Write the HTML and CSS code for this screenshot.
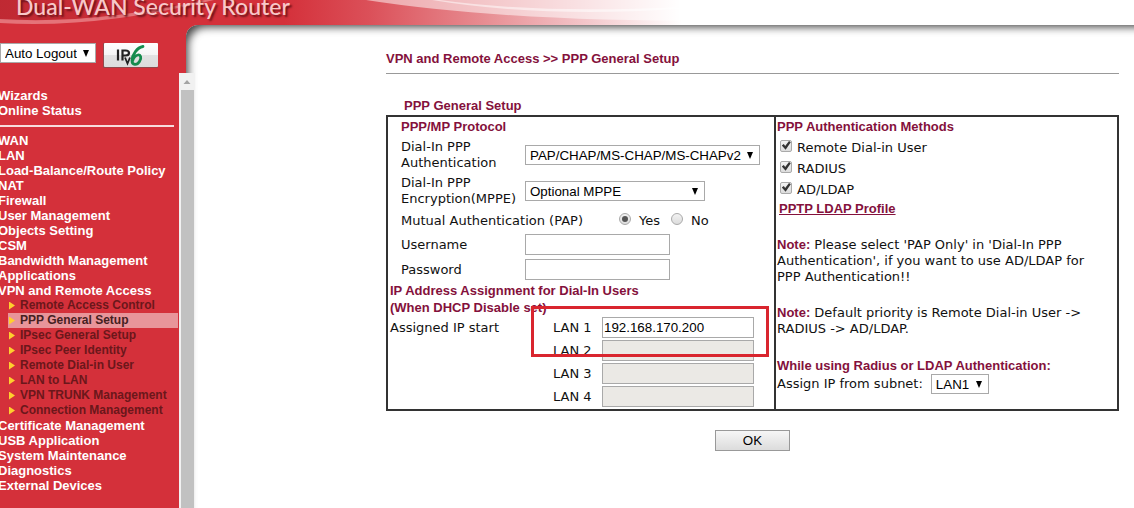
FILE: index.html
```html
<!DOCTYPE html>
<html lang="en">

<head>
  <meta charset="utf-8">
  <title>PPP General Setup</title>
  <link rel="stylesheet" href="styles.css">
</head>

<body>
  <header class="banner">
    <svg class="banner-art" width="710" height="25" viewBox="0 0 710 25" aria-hidden="true">
      <defs>
        <linearGradient id="fade" x1="0" x2="1" y1="0" y2="0">
          <stop offset="0" stop-color="#d4303a" />
          <stop offset="0.4" stop-color="#d4303a" />
          <stop offset="0.52" stop-color="#db5059" />
          <stop offset="0.68" stop-color="#e78c91" />
          <stop offset="0.82" stop-color="#f3c4c8" />
          <stop offset="0.96" stop-color="#fff" />
        </linearGradient>
        <linearGradient id="dark" x1="0" x2="1" y1="0" y2="0">
          <stop offset="0" stop-color="#b2252e" />
          <stop offset="1" stop-color="#b2252e" stop-opacity="0" />
        </linearGradient>
      </defs>
      <rect width="710" height="25" fill="url(#fade)" />
      <path d="M0 0H230Q120 23 0 20Z" fill="url(#dark)" opacity="0.6" />
      <path d="M0 19Q90 25 205 0L214 0Q95 29 0 23Z" fill="#f0a0a4" opacity="0.6" />
      <path d="M366 0Q500 21 710 21V0Z" fill="#fff" opacity="0.5" />
      <path d="M440 0Q540 14 680 7L680 9Q540 18 432 0Z" fill="#fff" opacity="0.5" />
    </svg>
    <div class="banner-title">Dual-WAN Security Router</div>
  </header>

  <div class="layout">
    <aside class="sidebar">
      <div class="tools">
        <select class="logout" aria-label="Auto Logout">
          <option>Auto Logout</option>
        </select>
        <svg class="ipv6" width="55" height="25" viewBox="0 0 55 25" role="img" aria-label="IPv6">
          <defs>
            <linearGradient id="plate" x1="0" x2="0" y1="0" y2="1">
              <stop offset="0" stop-color="#fff" />
              <stop offset="0.5" stop-color="#f5f5f5" />
              <stop offset="0.52" stop-color="#e2e2e2" />
              <stop offset="1" stop-color="#dcdcdc" />
            </linearGradient>
          </defs>
          <rect width="55" height="25" rx="1" fill="#8f4a4c" />
          <rect x="1" width="54" height="24" rx="1" fill="url(#plate)" />
          <path d="M15 6.500V17.500M19.500 17.500V7.500H22.500Q26 7.500 26 10Q26 12.500 22.500 12.500H20" fill="none" stroke="#222" stroke-width="2.200" />
          <path d="M22 14.500L24.500 20.500L27 14.500" fill="none" stroke="#222" stroke-width="1.800" />
          <path d="M40 3.500C34 4.500 29 12 29 17.500C29 22.500 34 22.500 36.500 18.500C39 14.500 37.500 11.500 35 12C32.500 12.500 30.500 15 29.500 18" fill="none" stroke="#168c4e" stroke-width="2.800" stroke-linecap="round" />
        </svg>
      </div>
      <div class="menu-frame">
        <nav class="menu">
          <a href="#">Wizards</a>
          <a href="#">Online Status</a>
          <hr class="menu-line">
          <a href="#">WAN</a>
          <a href="#">LAN</a>
          <a href="#">Load-Balance/Route Policy</a>
          <a href="#">NAT</a>
          <a href="#">Firewall</a>
          <a href="#">User Management</a>
          <a href="#">Objects Setting</a>
          <a href="#">CSM</a>
          <a href="#">Bandwidth Management</a>
          <a href="#">Applications</a>
          <a href="#">VPN and Remote Access</a>
          <div class="submenu">
            <a href="#">Remote Access Control</a>
            <a href="#" class="active">PPP General Setup</a>
            <a href="#">IPsec General Setup</a>
            <a href="#">IPsec Peer Identity</a>
            <a href="#">Remote Dial-in User</a>
            <a href="#">LAN to LAN</a>
            <a href="#">VPN TRUNK Management</a>
            <a href="#">Connection Management</a>
          </div>
          <a href="#">Certificate Management</a>
          <a href="#">USB Application</a>
          <a href="#">System Maintenance</a>
          <a href="#">Diagnostics</a>
          <a href="#">External Devices</a>
        </nav>
        <div class="scrollbar">
          <svg width="16" height="17" viewBox="0 0 16 17" aria-hidden="true">
            <path d="M4.500 11L8 7L11.500 11Z" fill="#a3a3a3" />
          </svg>
          <div class="thumb"></div>
        </div>
      </div>
    </aside>

    <main class="content">
      <h1 class="page-title">VPN and Remote Access &gt;&gt; PPP General Setup</h1>
      <form class="setup">
        <h2 class="section-title">PPP General Setup</h2>
        <div class="panels">
          <section class="panel">
            <div class="protocol">
              <h3>PPP/MP Protocol</h3>
              <div class="row tall">
                <label for="auth">Dial-In PPP Authentication</label>
                <select id="auth" class="auth">
                  <option>PAP/CHAP/MS-CHAP/MS-CHAPv2</option>
                </select>
              </div>
              <div class="row tall">
                <label for="mppe">Dial-In PPP Encryption(MPPE)</label>
                <select id="mppe" class="mppe">
                  <option>Optional MPPE</option>
                </select>
              </div>
              <div class="row mutual">
                <span class="mutual-label">Mutual Authentication (PAP)</span>
                <input type="radio" name="mutual" id="yes" checked><label for="yes">Yes</label>
                <input type="radio" name="mutual" id="no"><label for="no">No</label>
              </div>
              <div class="row">
                <label for="username">Username</label>
                <input type="text" id="username" class="credential">
              </div>
              <div class="row">
                <label for="password">Password</label>
                <input type="password" id="password" class="credential">
              </div>
            </div>
            <div class="assignment">
              <h3>IP Address Assignment for Dial-In Users<br>(When DHCP Disable set)</h3>
              <div class="assigned">
                <span class="assigned-label">Assigned IP start</span>
                <div class="lans">
                  <div class="lan"><label for="lan1">LAN 1</label><input type="text" id="lan1" value="192.168.170.200"></div>
                  <div class="lan"><label for="lan2">LAN 2</label><input type="text" id="lan2" disabled></div>
                  <div class="lan"><label for="lan3">LAN 3</label><input type="text" id="lan3" disabled></div>
                  <div class="lan"><label for="lan4">LAN 4</label><input type="text" id="lan4" disabled></div>
                  <div class="marker"></div>
                </div>
              </div>
            </div>
          </section>

          <section class="panel methods">
            <h3>PPP Authentication Methods</h3>
            <div class="check"><input type="checkbox" id="remote" checked><label for="remote">Remote Dial-in User</label></div>
            <div class="check"><input type="checkbox" id="radius" checked><label for="radius">RADIUS</label></div>
            <div class="check"><input type="checkbox" id="ldap" checked><label for="ldap">AD/LDAP</label></div>
            <a href="#" class="profile">PPTP LDAP Profile</a>
            <p><b>Note:</b> Please select 'PAP Only' in 'Dial-In PPP Authentication', if you want to use AD/LDAP for PPP Authentication!!</p>
            <p><b>Note:</b> Default priority is Remote Dial-in User -&gt; RADIUS -&gt; AD/LDAP.</p>
            <h3>While using Radius or LDAP Authentication:</h3>
            <div class="subnet">
              <label for="subnet">Assign IP from subnet:</label>
              <select id="subnet">
                <option>LAN1</option>
              </select>
            </div>
          </section>
        </div>
        <button type="button" class="ok">OK</button>
      </form>
    </main>
  </div>
</body>

</html>
```

FILE: styles.css
```css
* {
  box-sizing: border-box;
}

body {
  margin: 0;
  min-height: 100vh;
  display: flex;
  flex-direction: column;
  font: 13px/16px Verdana, "DejaVu Sans", sans-serif;
  color: #111;
  background: #fff;
}

h1,
h2,
h3,
p {
  margin: 0;
}

/* banner */
.banner {
  position: relative;
  height: 25px;
  overflow: hidden;
}

.banner-art {
  position: absolute;
  top: 0;
  left: 0;
}

.banner-title {
  position: relative;
  margin-top: -8px;
  padding-left: 16px;
  font: 500 23px/28px Lato, sans-serif;
  color: #f8c8c9;
  text-shadow: 2px 2px 2px #6d1218;
  white-space: nowrap;
}

.layout {
  flex: 1;
  display: flex;
  background: #d4303a;
}

/* sidebar */
.sidebar {
  flex: none;
  width: 186px;
  display: flex;
  flex-direction: column;
}

.tools {
  display: flex;
  align-items: flex-start;
  gap: 7px;
  height: 48px;
  padding-top: 18px;
}

.menu-frame {
  position: relative;
  z-index: 1;
  flex: 1;
  display: flex;
  margin-right: -9px;
}

.menu {
  flex: 1;
  padding-top: 15px;
  font: bold 13px/15px Arial, "Liberation Sans", sans-serif;
}

.menu a {
  display: block;
  margin-left: -2px;
  color: #fff;
  text-decoration: none;
  white-space: nowrap;
}

.menu-line {
  height: 2px;
  margin: 7px 5px 6px 0;
  border: 0;
  background: #f7dcdd;
}

.submenu {
  padding: 0 1px 0 8px;
  font-size: 12px;
}

.menu .submenu a {
  display: flex;
  align-items: center;
  gap: 5px;
  margin: 0;
  padding-left: 1px;
  color: #6b171b;
}

.submenu a::before {
  content: "";
  width: 6px;
  height: 8px;
  background: #ffcf2e;
  clip-path: polygon(0 0, 100% 50%, 0 100%);
}

.menu .submenu .active {
  background: #e8959a;
  color: #45201f;
}

.scrollbar {
  flex: none;
  width: 16px;
  display: flex;
  flex-direction: column;
  background: #f1f1f1;
}

.thumb {
  flex: 1;
  margin: 0 1px 0 2px;
  background: #c1c1c1;
}

/* content */
.content {
  flex: 1;
  min-width: 0;
  padding: 25px 15px 20px 200px;
  background: #fff;
  border-top-left-radius: 12px;
  box-shadow: inset 8px 8px 8px -6px #444;
}

.page-title,
.section-title,
h3,
.profile,
.methods b {
  font: bold 13px/17px Arial, "Liberation Sans", sans-serif;
  color: #84113c;
}

.page-title {
  padding-bottom: 6px;
  border-bottom: 1px solid #999;
}

.section-title {
  margin-top: 23px;
  padding-left: 18px;
}

.setup {
  display: flex;
  flex-direction: column;
}

.panels {
  display: grid;
  grid-template-columns: 386px 1fr;
  margin-top: 1px;
  border: 2px solid #333;
}

.panel {
  padding-bottom: 1px;
}

.protocol {
  padding-left: 13px;
}

.protocol h3,
.methods h3:first-child {
  line-height: 20px;
}

.row {
  display: flex;
  align-items: center;
  height: 25px;
}

.row.tall {
  height: 36px;
}

.row > label:first-child {
  width: 124px;
}

select,
input[type="text"],
input[type="password"] {
  margin: 0;
  border: 1px solid #a9a9a9;
  font-family: Arial, "Liberation Sans", sans-serif;
  color: #000;
  background-color: #fff;
}

select {
  appearance: none;
  height: 20px;
  padding: 0 18px 0 4px;
  background-image: url("data:image/svg+xml,%3Csvg xmlns='http://www.w3.org/2000/svg' width='6' height='7'%3E%3Cpath d='M0 0H6L3 7Z'/%3E%3C/svg%3E");
  background-repeat: no-repeat;
  background-position: right 6px center;
}

.logout {
  width: 96px;
}

.auth {
  width: 235px;
}

.mppe {
  width: 180px;
}

.row.mutual {
  height: 23px;
}

.mutual-label {
  width: 218px;
}

.mutual label {
  margin: 0 11px 0 8px;
}

input[type="text"],
input[type="password"] {
  height: 21px;
  padding: 1px;
}

.credential {
  width: 145px;
}

input[type="radio"],
input[type="checkbox"] {
  appearance: none;
  display: grid;
  place-items: center;
  flex: none;
  width: 12px;
  height: 12px;
  margin: 0 0 4px;
  border: 1px solid #aaa;
  background: linear-gradient(#f2f2f2, #dcdcdc);
}

input[type="radio"] {
  border-radius: 50%;
}

input[type="radio"]:checked::before {
  content: "";
  width: 6px;
  height: 6px;
  border-radius: 50%;
  background: #555;
}

input[type="checkbox"] {
  border-radius: 2px;
}

input[type="checkbox"]:checked::before {
  content: "";
  width: 10px;
  height: 10px;
  background: #333;
  clip-path: polygon(8% 50%, 28% 36%, 42% 55%, 80% 5%, 98% 18%, 46% 92%);
}

.assignment {
  padding-left: 2px;
}

.assigned {
  display: flex;
}

.assigned-label {
  width: 163px;
  line-height: 23px;
}

.lans {
  position: relative;
}

.lan {
  display: flex;
  align-items: center;
  height: 23px;
}

.lan label {
  width: 49px;
}

.lan input {
  width: 152px;
}

.lan input:disabled {
  background: #ebe9e5;
}

.marker {
  position: absolute;
  top: -10px;
  left: -22px;
  width: 238px;
  height: 51px;
  border: 3px solid #d9252e;
}

.methods {
  padding-left: 1px;
  border-left: 2px solid #333;
}

.check {
  display: flex;
  align-items: center;
  gap: 5px;
  height: 21px;
  padding-left: 3px;
}

.profile {
  display: inline-block;
  margin-left: 2px;
}

.methods p {
  margin-top: 20px;
  padding-right: 8px;
}

.methods b {
  line-height: 16px;
}

.methods p + h3 {
  margin-top: 20px;
}

.subnet {
  display: flex;
  align-items: center;
  gap: 8px;
}

.ok {
  align-self: center;
  width: 75px;
  height: 21px;
  margin-top: 19px;
  padding: 0;
  border: 1px solid #999;
  background: linear-gradient(#f6f6f6, #dcdcdc);
  font-family: Arial, "Liberation Sans", sans-serif;
  color: #000;
}
```
